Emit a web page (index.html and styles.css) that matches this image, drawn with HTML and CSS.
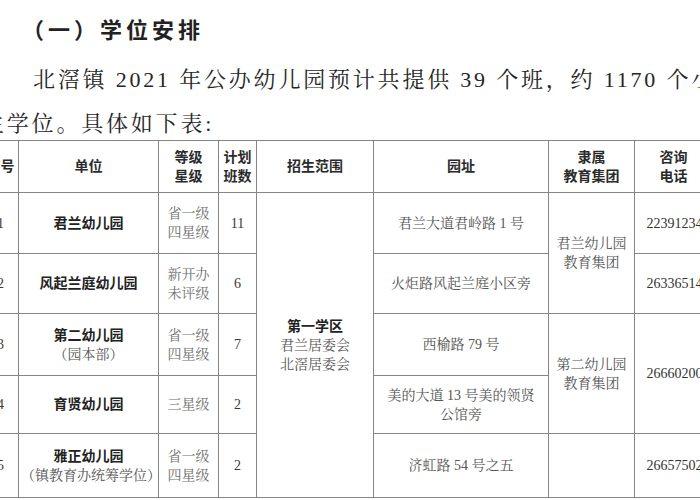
FILE: index.html
```html
<!DOCTYPE html>
<html lang="zh-CN">
<head>
<meta charset="utf-8">
<title>学位安排</title>
<link rel="stylesheet" href="styles.css">
</head>
<body>
<div class="page">
  <h2 class="title">（一）学位安排</h2>
  <p class="intro">北滘镇 2021 年公办幼儿园预计共提供 39 个班，约 1170 个小班新<br>生学位。具体如下表:</p>
  <table class="grid">
    <colgroup>
      <col class="c-no"><col class="c-unit"><col class="c-grade"><col class="c-cls"><col class="c-area"><col class="c-addr"><col class="c-group"><col class="c-tel">
    </colgroup>
    <thead>
      <tr class="r-head">
        <th class="h-no">序号</th>
        <th>单位</th>
        <th>等级<br>星级</th>
        <th>计划<br>班数</th>
        <th>招生范围</th>
        <th>园址</th>
        <th>隶属<br>教育集团</th>
        <th>咨询<br>电话</th>
      </tr>
    </thead>
    <tbody>
      <tr class="r1">
        <td class="num">1</td>
        <td class="unit">君兰幼儿园</td>
        <td class="grade">省一级<br>四星级</td>
        <td class="num">11</td>
        <td class="area" rowspan="5"><b>第一学区</b><br>君兰居委会<br>北滘居委会</td>
        <td class="addr">君兰大道君岭路 1 号</td>
        <td class="group" rowspan="2">君兰幼儿园<br>教育集团</td>
        <td class="tel">22391234</td>
      </tr>
      <tr class="r2">
        <td class="num">2</td>
        <td class="unit">风起兰庭幼儿园</td>
        <td class="grade">新开办<br>未评级</td>
        <td class="num">6</td>
        <td class="addr">火炬路风起兰庭小区旁</td>
        <td class="tel">26336514</td>
      </tr>
      <tr class="r3">
        <td class="num">3</td>
        <td class="unit">第二幼儿园<br><span class="sub">（园本部）</span></td>
        <td class="grade">省一级<br>四星级</td>
        <td class="num">7</td>
        <td class="addr">西榆路 79 号</td>
        <td class="group" rowspan="2">第二幼儿园<br>教育集团</td>
        <td class="tel" rowspan="2">26660200</td>
      </tr>
      <tr class="r4">
        <td class="num">4</td>
        <td class="unit">育贤幼儿园</td>
        <td class="grade">三星级</td>
        <td class="num">2</td>
        <td class="addr">美的大道 13 号美的领贤<br>公馆旁</td>
      </tr>
      <tr class="r5">
        <td class="num">5</td>
        <td class="unit">雅正幼儿园<br><span class="sub">（镇教育办统筹学位）</span></td>
        <td class="grade">省一级<br>四星级</td>
        <td class="num">2</td>
        <td class="addr">济虹路 54 号之五</td>
        <td class="group"></td>
        <td class="tel">26657502</td>
      </tr>
    </tbody>
  </table>
</div>
</body>
</html>
```
FILE: styles.css
```css
html, body {
  margin: 0;
  padding: 0;
  background: #ffffff;
  overflow: hidden;
}
.page {
  margin-left: -18px;
  width: 740px;
  font-family: "Liberation Serif", "Noto Serif CJK SC", "Noto Sans CJK SC", serif;
  color: #262626;
}
.title {
  margin: 9px 0 5px 0;
  padding-left: 40px;
  font-family: "Liberation Sans", "Noto Sans CJK SC", sans-serif;
  font-size: 22px;
  font-weight: bold;
  line-height: 44px;
  letter-spacing: 4px;
  color: #222;
}
.intro {
  margin: 0 0 -6px 0;
  font-size: 22px;
  line-height: 44px;
  letter-spacing: 2.8px;
  text-indent: 51px;
  white-space: nowrap;
  color: #262626;
}
.grid {
  border-collapse: collapse;
  table-layout: fixed;
  width: 730px;
  font-size: 14px;
  line-height: 19px;
}
.c-no { width: 36px; }
.c-unit { width: 140px; }
.c-grade { width: 60px; }
.c-cls { width: 38px; }
.c-area { width: 117px; }
.c-addr { width: 175px; }
.c-group { width: 86px; }
.c-tel { width: 78px; }
.grid th, .grid td {
  border: 1px solid #858585;
  padding: 0 4px;
  text-align: center;
  vertical-align: middle;
  overflow: hidden;
  white-space: nowrap;
}
.grid th {
  font-family: "Liberation Sans", "Noto Sans CJK SC", sans-serif;
  font-weight: bold;
  color: #2b2b2b;
  line-height: 19px;
}
.grid .h-no { padding: 0; }
.r-head { height: 52px; }
.r1 { height: 61px; }
.r2 { height: 60px; }
.r3 { height: 62px; }
.r4 { height: 58px; }
.r5 { height: 64px; }
.grid .num { color: #3a3a3a; padding: 0; }
.grid .unit {
  font-family: "Liberation Sans", "Noto Sans CJK SC", sans-serif;
  font-weight: bold;
  color: #222;
  padding: 0 2px;
}
.grid .unit .sub {
  font-family: "Liberation Serif", "Noto Serif CJK SC", "Noto Sans CJK SC", serif;
  font-weight: normal;
  color: #555;
}
.grid .grade { color: #707070; }
.grid .area { color: #555; }
.grid .area b {
  font-family: "Liberation Sans", "Noto Sans CJK SC", sans-serif;
  color: #222;
}
.grid .addr { color: #555; padding: 0 4px; }
.grid .group { color: #555; }
.grid .tel { color: #333; padding: 0 0 0 2px; }
```
